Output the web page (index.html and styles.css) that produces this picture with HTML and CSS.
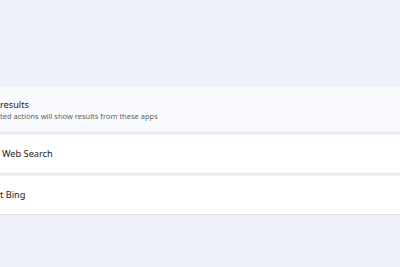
FILE: index.html
```html
<!DOCTYPE html>
<html lang="en">
  <head>
    <meta charset="UTF-8" />
    <meta name="viewport" content="width=device-width, initial-scale=1.0" />
    <title>Search providers</title>
    <link rel="stylesheet" href="styles.css">
  </head>
  <body>
    <div class="page">
      <div class="list">
        <div class="card card-head">
          <div class="title">results</div>
          <div class="subtitle">ted actions will show results from these apps</div>
        </div>
        <div class="card row-web">
          <div class="title">Web Search</div>
        </div>
        <div class="card">
          <div class="title">t Bing</div>
        </div>
      </div>
    </div>
  </body>
</html>
```

FILE: styles.css
```css
* {
  margin: 0;
  padding: 0;
  box-sizing: border-box;
}
body {
  background: #eef1f9;
  font-family: "Noto Sans", "Open Sans", sans-serif;
  width: 400px;
  height: 267px;
  overflow: hidden;
}
.page {
  padding-top: 87px;
}
.list {
  display: flex;
  flex-direction: column;
  gap: 2px;
}
.card {
  background: #ffffff;
  border-bottom: 1px solid #e2e3e8;
  height: 39px;
  display: flex;
  flex-direction: column;
  justify-content: center;
  padding-left: 0;
}
.card-head {
  background: #f9fafe;
  height: 46px;
}
.row-web {
  padding-left: 2px;
}
.title {
  font-size: 9.2px;
  color: #1a1a1a;
  line-height: 12px;
}
.subtitle {
  font-size: 7.5px;
  color: #616161;
  line-height: 10px;
}
```
